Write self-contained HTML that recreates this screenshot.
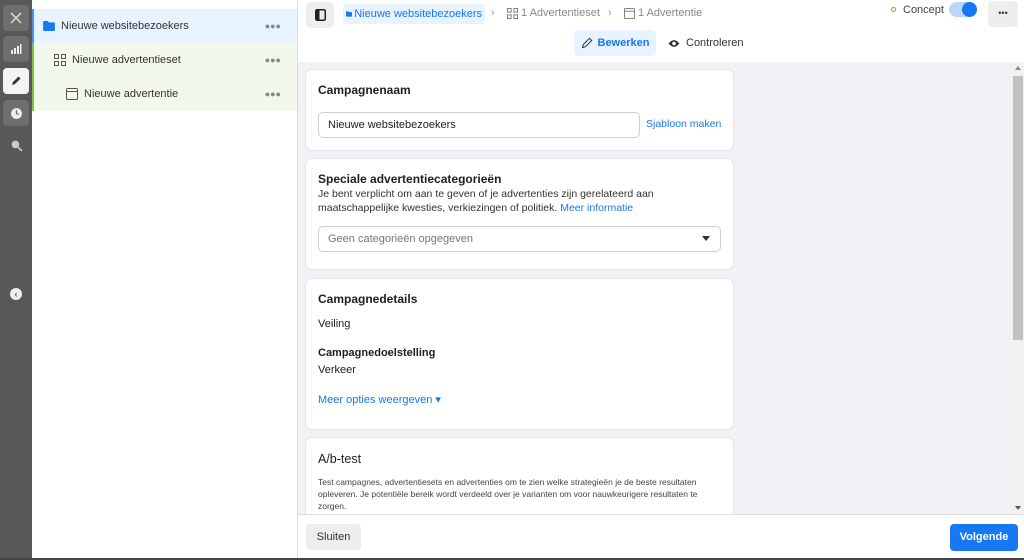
<!DOCTYPE html>
<html><head><meta charset="utf-8"><style>
*{box-sizing:border-box;margin:0;padding:0}
body{width:1024px;height:560px;overflow:hidden;font-family:"Liberation Sans",Arial,sans-serif;font-size:11px;color:#1c1e21;position:relative;background:#fff}
.rail{position:absolute;left:0;top:0;width:32px;height:560px;background:#585858}
.rb{position:absolute;left:3px;width:26px;height:26px;border-radius:4px;background:#6e6e6e;display:flex;align-items:center;justify-content:center}
.tree{position:absolute;left:32px;top:0;width:266px;height:560px;background:#fff;border-right:1px solid #ddd}
.row{position:absolute;left:0;width:265px;height:34px;display:flex;align-items:center;font-size:11px;color:#333}
.dots{position:absolute;right:16px;color:#888;font-size:9px;letter-spacing:0px}
.main{position:absolute;left:298px;top:0;width:726px;height:560px}
.gray{position:absolute;left:0;top:62px;width:714px;height:452px;background:#f0f2f5}
.card{position:absolute;left:8px;width:427px;background:#fff;border-radius:6px;box-shadow:0 0 0 1px #e4e6ea}
h3{font-size:12px;font-weight:bold;color:#1c1e21}
.link{color:#1877f2}
</style></head><body>
<div class="rail">
 <div class="rb" style="top:5px"><svg width="12" height="12" viewBox="0 0 12 12" stroke="#ddd" stroke-width="1.5"><path d="M1 1L11 11M11 1L1 11"/></svg></div>
 <div class="rb" style="top:36px"><svg width="12" height="12" viewBox="0 0 12 12" fill="#eee"><rect x="1" y="7" width="2" height="4"/><rect x="4" y="5" width="2" height="6"/><rect x="7" y="3" width="2" height="8"/><rect x="10" y="1" width="1.5" height="10"/></svg></div>
 <div class="rb" style="top:68px;background:#f4f4f4"><svg width="12" height="12" viewBox="0 0 12 12"><path d="M2 10L3 7L8.5 1.5L10.5 3.5L5 9Z" fill="#333"/></svg></div>
 <div class="rb" style="top:100px"><svg width="13" height="13" viewBox="0 0 12 12"><circle cx="6" cy="6" r="5" fill="#eee"/><path d="M6 3V6L8 7" stroke="#6e6e6e" fill="none" stroke-width="1.2"/></svg></div>
 <div style="position:absolute;left:10px;top:139px"><svg width="13" height="13" viewBox="0 0 12 12"><circle cx="5" cy="5" r="3.5" fill="#ccc"/><path d="M7.5 7.5L11 11" stroke="#ccc" stroke-width="1.5"/></svg></div>
 <div style="position:absolute;left:10px;top:288px;width:12px;height:12px;border-radius:50%;background:#eee;font-size:9px;color:#555;text-align:center;line-height:12px;font-weight:bold">‹</div>
</div>
<div class="tree">
 <div class="row" style="top:9px;background:#e7f3ff;border-left:2px solid #4b8ff0"><svg style="margin-left:9px" width="12" height="10" viewBox="0 0 13 11"><path d="M0 1.5Q0 0 1.5 0H5L6.5 1.5H11.5Q13 1.5 13 3V9.5Q13 11 11.5 11H1.5Q0 11 0 9.5Z" fill="#1877f2"/></svg><span style="margin-left:6px">Nieuwe websitebezoekers</span><span class="dots">●●●</span></div>
 <div class="row" style="top:43px;background:#f2f9ec;border-left:2px solid #7cc24a"><svg style="margin-left:20px" width="12" height="12" viewBox="0 0 12 12" fill="none" stroke="#555"><rect x=".5" y=".5" width="4" height="4"/><rect x="7.5" y=".5" width="4" height="4"/><rect x=".5" y="7.5" width="4" height="4"/><rect x="7.5" y="7.5" width="4" height="4"/></svg><span style="margin-left:6px">Nieuwe advertentieset</span><span class="dots">●●●</span></div>
 <div class="row" style="top:77px;background:#f2f9ec;border-left:2px solid #7cc24a"><svg style="margin-left:32px" width="12" height="12" viewBox="0 0 12 12" fill="none" stroke="#555"><rect x=".5" y=".5" width="11" height="11" rx="1"/><path d="M.5 3.5H11.5"/></svg><span style="margin-left:6px">Nieuwe advertentie</span><span class="dots">●●●</span></div>
</div>
<div class="main">
 <div style="position:absolute;left:8px;top:2px;width:28px;height:26px;background:#eee;border-radius:5px;display:flex;align-items:center;justify-content:center"><svg width="11" height="12" viewBox="0 0 11 12"><rect x=".75" y=".75" width="9.5" height="10.5" rx="1.5" fill="none" stroke="#222" stroke-width="1.5"/><rect x="1" y="1" width="3.5" height="10" fill="#222"/></svg></div>
 <div style="position:absolute;left:45px;top:4px;width:142px;height:20px;padding:0 3px;background:#e7f3ff;border-radius:3px;display:flex;align-items:center;color:#1877f2;white-space:nowrap"><svg width="11" height="10" viewBox="0 0 13 11"><path d="M0 1.5Q0 0 1.5 0H5L6.5 1.5H11.5Q13 1.5 13 3V9.5Q13 11 11.5 11H1.5Q0 11 0 9.5Z" fill="#1877f2"/></svg><span style="margin-left:2px">Nieuwe websitebezoekers</span></div>
 <div style="position:absolute;left:193px;top:7px;color:#999">›</div>
 <div style="position:absolute;left:209px;top:7px;color:#888;display:flex;align-items:center;white-space:nowrap"><svg width="11" height="11" viewBox="0 0 12 12" fill="none" stroke="#777"><rect x=".5" y=".5" width="4" height="4"/><rect x="7.5" y=".5" width="4" height="4"/><rect x=".5" y="7.5" width="4" height="4"/><rect x="7.5" y="7.5" width="4" height="4"/></svg><span style="margin-left:3px">1 Advertentieset</span></div>
 <div style="position:absolute;left:310px;top:7px;color:#999">›</div>
 <div style="position:absolute;left:326px;top:7px;color:#888;display:flex;align-items:center;white-space:nowrap"><svg width="11" height="11" viewBox="0 0 12 12" fill="none" stroke="#777"><rect x=".5" y=".5" width="11" height="11" rx="1"/><path d="M.5 3.5H11.5"/></svg><span style="margin-left:3px">1 Advertentie</span></div>
 <div style="position:absolute;left:593px;top:7px;width:5px;height:5px;border:1.5px solid #5fb43b;border-radius:50%"></div>
 <div style="position:absolute;left:605px;top:4px;color:#444">Concept</div>
 <div style="position:absolute;left:651px;top:2px;width:28px;height:15px;border-radius:8px;background:#bcd6f7"><div style="position:absolute;right:0;top:0;width:15px;height:15px;border-radius:50%;background:#1877f2"></div></div>
 <div style="position:absolute;left:690px;top:1px;width:30px;height:26px;background:#eee;border-radius:4px;text-align:center;line-height:24px;font-size:9px;color:#333">•••</div>
 <div style="position:absolute;left:276px;top:30px;width:82px;height:26px;background:#e7f3ff;border-radius:4px;display:flex;align-items:center;justify-content:center;color:#1877f2;font-weight:bold"><svg width="12" height="12" viewBox="0 0 12 12" style="margin-right:5px"><path d="M1.5 10.5L2.3 7.5L8.5 1.3L10.7 3.5L4.5 9.7Z" fill="none" stroke="#333" stroke-width="1"/></svg>Bewerken</div>
 <div style="position:absolute;left:370px;top:30px;height:26px;display:flex;align-items:center;color:#333"><svg width="12" height="9" viewBox="0 0 13 10" style="margin-right:6px"><path d="M.5 5Q6.5-2.5 12.5 5Q6.5 12.5 .5 5Z" fill="#333"/><circle cx="6.5" cy="5" r="2" fill="#fff"/></svg>Controleren</div>
 <div class="gray">
  <div class="card" style="top:8px;height:80px"><h3 style="position:absolute;left:12px;top:13px">Campagnenaam</h3>
   <div style="position:absolute;left:12px;top:42px;width:322px;height:26px;border:1px solid #ccd0d5;border-radius:5px;padding-left:9px;line-height:24px;font-size:11px">Nieuwe websitebezoekers</div>
   <div class="link" style="position:absolute;left:340px;top:48px;font-size:10.5px">Sjabloon maken</div></div>
  <div class="card" style="top:97px;height:110px"><h3 style="position:absolute;left:12px;top:13px">Speciale advertentiecategorieën</h3>
   <div style="position:absolute;left:12px;top:28px;width:400px;font-size:10.5px;line-height:14px;color:#333">Je bent verplicht om aan te geven of je advertenties zijn gerelateerd aan maatschappelijke kwesties, verkiezingen of politiek. <span class="link">Meer informatie</span></div>
   <div style="position:absolute;left:12px;top:67px;width:403px;height:26px;border:1px solid #ccd0d5;border-radius:5px;padding-left:9px;line-height:24px;font-size:11px;color:#777">Geen categorieën opgegeven<span style="position:absolute;right:10px;top:9px;width:0;height:0;border-left:4px solid transparent;border-right:4px solid transparent;border-top:5px solid #333"></span></div></div>
  <div class="card" style="top:217px;height:150px"><h3 style="position:absolute;left:12px;top:13px">Campagnedetails</h3>
   <div style="position:absolute;left:12px;top:39px;font-size:11px">Veiling</div>
   <div style="position:absolute;left:12px;top:68px;font-size:11px;font-weight:bold">Campagnedoelstelling</div>
   <div style="position:absolute;left:12px;top:85px;font-size:11px">Verkeer</div>
   <div class="link" style="position:absolute;left:12px;top:114px;font-size:11px">Meer opties weergeven ▾</div></div>
  <div class="card" style="top:376px;height:90px"><h3 style="position:absolute;left:12px;top:14px;font-weight:normal;font-size:12.5px">A/b-test</h3>
   <div style="position:absolute;left:12px;top:38px;width:405px;font-size:8.5px;line-height:12px;color:#444">Test campagnes, advertentiesets en advertenties om te zien welke strategieën je de beste resultaten opleveren. Je potentiële bereik wordt verdeeld over je varianten om voor nauwkeurigere resultaten te zorgen.</div></div>
 </div>
 <div style="position:absolute;left:714px;top:62px;width:12px;height:452px;background:#f1f1f1"><div style="position:absolute;left:1px;top:14px;width:10px;height:264px;background:#c1c1c1"></div><div style="position:absolute;left:3px;top:4px;border-left:3px solid transparent;border-right:3px solid transparent;border-bottom:4px solid #888"></div><div style="position:absolute;left:3px;bottom:4px;border-left:3px solid transparent;border-right:3px solid transparent;border-top:4px solid #555"></div></div>
 <div style="position:absolute;left:0;top:514px;width:726px;height:44px;border-top:1px solid #ddd;background:#fff">
  <div style="position:absolute;left:8px;top:9px;width:55px;height:26px;background:#eee;border-radius:4px;text-align:center;line-height:26px;color:#333">Sluiten</div>
  <div style="position:absolute;left:652px;top:9px;width:68px;height:27px;background:#1877f2;border-radius:4px;text-align:center;line-height:27px;color:#fff;font-weight:bold">Volgende</div>
 </div>
</div>
<div style="position:absolute;left:0;top:558px;width:1024px;height:2px;background:#444"></div>
</body></html>
